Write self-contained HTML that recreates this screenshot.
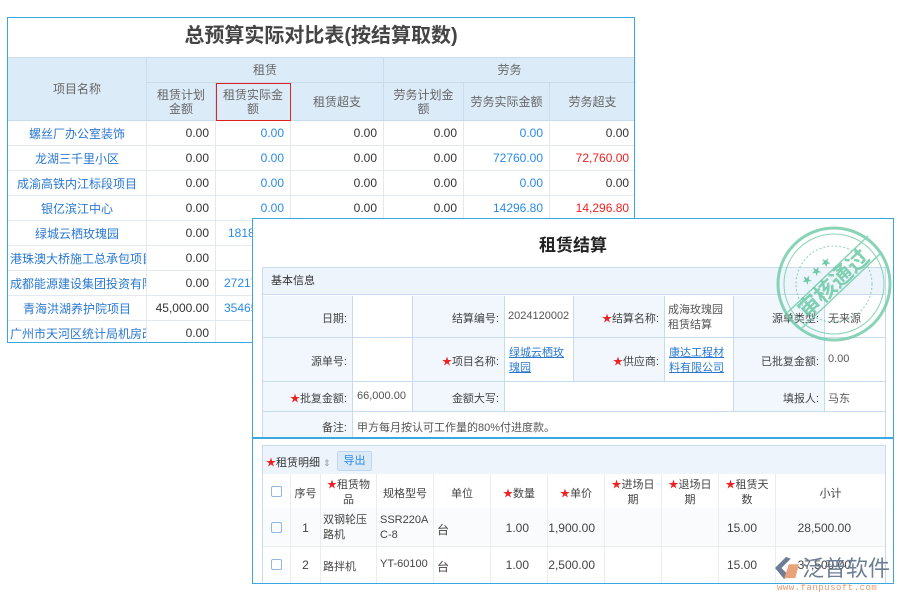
<!DOCTYPE html>
<html><head><meta charset="utf-8">
<style>
*{margin:0;padding:0;box-sizing:border-box}
body{width:900px;height:600px;background:#fff;position:relative;overflow:hidden;font-family:"Liberation Sans","Noto Sans CJK SC",sans-serif;font-size:12px;color:#333}
.a{position:absolute}
#back{left:7px;top:17px;width:628px;height:326px;border:1px solid #39a7e0;background:#fff;overflow:hidden}
#back table{border-collapse:collapse;table-layout:fixed;position:absolute;left:-1px;top:39px;width:628px}
#back td{border:1px solid #e3e9ef;height:25px;text-align:right;padding-right:6px;white-space:nowrap;overflow:hidden}
#back td.n{text-align:center;color:#2a78d0;padding:0 2px}
#back tr.h td{background:#dcebf8;color:#666;text-align:center;border-color:#c8dcee;padding:0;white-space:normal;line-height:14px}
.b{color:#2a8ae6}.r{color:#ee2222}
#front{left:252px;top:218px;width:642px;height:366px;border:1px solid #39a7e0;background:#fff;overflow:hidden}
.ln{position:absolute;background:#c6dbee}
.lab{position:absolute;text-align:right;color:#444}
.val{position:absolute;color:#555}
.st{color:#e22;font-size:10px}
.lk{color:#2a78d0;text-decoration:underline}
</style></head><body>
<div id="back" class="a">
<div class="a" style="left:0;top:0;width:626px;height:39px;text-align:center;line-height:37px;font-size:20px;font-weight:bold;color:#444">总预算实际对比表(按结算取数)</div>
<table>
<colgroup><col style="width:139px"><col style="width:69px"><col style="width:75px"><col style="width:93px"><col style="width:80px"><col style="width:86px"><col style="width:86px"></colgroup>
<tr class="h"><td rowspan="2" style="vertical-align:top;padding-top:24px">项目名称</td><td colspan="3" style="height:25px">租赁</td><td colspan="3">劳务</td></tr>
<tr class="h" style="height:38px"><td>租赁计划<br>金额</td><td style="outline:1px solid #d22;outline-offset:-1px">租赁实际金<br>额</td><td>租赁超支</td><td>劳务计划金<br>额</td><td>劳务实际金额</td><td>劳务超支</td></tr>
<tr><td class="n">螺丝厂办公室装饰</td><td>0.00</td><td class="b">0.00</td><td>0.00</td><td>0.00</td><td class="b">0.00</td><td>0.00</td></tr>
<tr><td class="n">龙湖三千里小区</td><td>0.00</td><td class="b">0.00</td><td>0.00</td><td>0.00</td><td class="b">72760.00</td><td class="r">72,760.00</td></tr>
<tr><td class="n">成渝高铁内江标段项目</td><td>0.00</td><td class="b">0.00</td><td>0.00</td><td>0.00</td><td class="b">0.00</td><td>0.00</td></tr>
<tr><td class="n">银亿滨江中心</td><td>0.00</td><td class="b">0.00</td><td>0.00</td><td>0.00</td><td class="b">14296.80</td><td class="r">14,296.80</td></tr>
<tr><td class="n">绿城云栖玫瑰园</td><td>0.00</td><td class="b" style="text-align:left;padding-left:12px">18180</td><td></td><td></td><td></td><td></td></tr>
<tr><td class="n" style="text-align:left">港珠澳大桥施工总承包项目</td><td>0.00</td><td></td><td></td><td></td><td></td><td></td></tr>
<tr><td class="n" style="text-align:left">成都能源建设集团投资有限</td><td>0.00</td><td class="b" style="text-align:left;padding-left:8px">27217</td><td></td><td></td><td></td><td></td></tr>
<tr><td class="n">青海洪湖养护院项目</td><td>45,000.00</td><td class="b" style="text-align:left;padding-left:8px">35465</td><td></td><td></td><td></td><td></td></tr>
<tr><td class="n" style="text-align:left">广州市天河区统计局机房改</td><td>0.00</td><td></td><td></td><td></td><td></td><td></td></tr>
</table>
</div>

<div id="front" class="a">
<div class="a" style="left:0;top:12px;width:640px;text-align:center;font-size:17px;font-weight:bold;color:#222">租赁结算</div>
<div class="a" style="left:9px;top:48px;width:624px;height:172px;border:1px solid #c6dbee;background:#fff"></div>
<div class="a" style="left:10px;top:49px;width:622px;height:27px;background:#edf4fb;border-bottom:1px solid #c6dbee;line-height:26px;padding-left:8px;font-size:11px;color:#333">基本信息</div>
<div class="a" style="left:10px;top:77px;width:89px;height:143px;background:#f1f7fd"></div>
<div class="a" style="left:159px;top:77px;width:92px;height:115px;background:#f1f7fd"></div>
<div class="a" style="left:320px;top:77px;width:91px;height:86px;background:#f1f7fd"></div>
<div class="a" style="left:480px;top:77px;width:91px;height:115px;background:#f1f7fd"></div>
<div class="ln" style="left:10px;top:118px;width:622px;height:1px"></div>
<div class="ln" style="left:10px;top:162px;width:622px;height:1px"></div>
<div class="ln" style="left:10px;top:192px;width:622px;height:1px"></div>
<div class="ln" style="left:99px;top:77px;width:1px;height:143px"></div>
<div class="ln" style="left:159px;top:77px;width:1px;height:115px"></div>
<div class="ln" style="left:251px;top:77px;width:1px;height:115px"></div>
<div class="ln" style="left:320px;top:77px;width:1px;height:86px"></div>
<div class="ln" style="left:411px;top:77px;width:1px;height:86px"></div>
<div class="ln" style="left:480px;top:77px;width:1px;height:115px"></div>
<div class="ln" style="left:571px;top:77px;width:1px;height:115px"></div>
<div style="font-size:11px">
<div class="lab" style="left:10px;top:91px;width:84px">日期:</div>
<div class="lab" style="left:160px;top:91px;width:86px">结算编号:</div>
<div class="val" style="left:255px;top:91px">2024120002</div>
<div class="lab" style="left:320px;top:91px;width:86px"><span class="st">★</span>结算名称:</div>
<div class="val" style="left:415px;top:84px;width:62px;line-height:15px">成海玫瑰园租赁结算</div>
<div class="lab" style="left:480px;top:91px;width:86px">源单类型:</div>
<div class="val" style="left:575px;top:91px">无来源</div>
<div class="lab" style="left:10px;top:134px;width:84px">源单号:</div>
<div class="lab" style="left:160px;top:134px;width:86px"><span class="st">★</span>项目名称:</div>
<div class="val lk" style="left:256px;top:127px;width:60px;line-height:15px">绿城云栖玫瑰园</div>
<div class="lab" style="left:320px;top:134px;width:86px"><span class="st">★</span>供应商:</div>
<div class="val lk" style="left:416px;top:127px;width:60px;line-height:15px">康达工程材料有限公司</div>
<div class="lab" style="left:480px;top:134px;width:86px">已批复金额:</div>
<div class="val" style="left:575px;top:134px">0.00</div>
<div class="lab" style="left:10px;top:171px;width:84px"><span class="st">★</span>批复金额:</div>
<div class="val" style="left:104px;top:171px">66,000.00</div>
<div class="lab" style="left:160px;top:171px;width:86px">金额大写:</div>
<div class="lab" style="left:480px;top:171px;width:86px">填报人:</div>
<div class="val" style="left:575px;top:171px">马东</div>
<div class="lab" style="left:10px;top:200px;width:84px">备注:</div>
<div class="val" style="left:104px;top:200px">甲方每月按认可工作量的80%付进度款。</div>
</div>
<div class="a" style="left:0;top:218px;width:640px;height:2px;background:#39a7e0"></div>
<div class="a" style="left:9px;top:226px;width:624px;height:150px;border:1px solid #c6dbee;border-bottom:none"></div>
<div class="a" style="left:10px;top:227px;width:622px;height:28px;background:#edf4fb"></div>
<div class="a" style="left:13px;top:235px;font-size:11px"><span class="st">★</span>租赁明细 <span style="color:#999;font-size:9px">⇕</span></div>
<div class="a" style="left:84px;top:232px;width:35px;height:20px;background:#dceaf8;border:1px solid #c0d8ef;border-radius:2px;color:#2a8ae6;text-align:center;line-height:18px;font-size:11px">导出</div>
<div class="a" style="left:10px;top:255px;width:622px;height:35px;background:#fff;border-bottom:1px solid #e3e9ef"></div>
<div class="a" style="left:10px;top:289px;width:622px;height:38px;background:#fafbfc"></div>
<div class="a" style="left:10px;top:327px;width:622px;height:1px;background:#e8edf2"></div>
<div class="a" style="left:37px;top:255px;width:1px;height:110px;background:#e8edf2"></div>
<div class="a" style="left:67px;top:255px;width:1px;height:110px;background:#e8edf2"></div>
<div class="a" style="left:123px;top:255px;width:1px;height:110px;background:#e8edf2"></div>
<div class="a" style="left:180px;top:255px;width:1px;height:110px;background:#e8edf2"></div>
<div class="a" style="left:237px;top:255px;width:1px;height:110px;background:#e8edf2"></div>
<div class="a" style="left:294px;top:255px;width:1px;height:110px;background:#e8edf2"></div>
<div class="a" style="left:351px;top:255px;width:1px;height:110px;background:#e8edf2"></div>
<div class="a" style="left:408px;top:255px;width:1px;height:110px;background:#e8edf2"></div>
<div class="a" style="left:465px;top:255px;width:1px;height:110px;background:#e8edf2"></div>
<div class="a" style="left:522px;top:255px;width:1px;height:110px;background:#e8edf2"></div>
<div style="font-size:11px;color:#444">
<div class="a" style="left:18px;top:267px;width:11px;height:11px;border:1px solid #8fb7e0;border-radius:2px"></div>
<div class="a" style="left:18px;top:303px;width:11px;height:11px;border:1px solid #8fb7e0;border-radius:2px"></div>
<div class="a" style="left:18px;top:340px;width:11px;height:11px;border:1px solid #8fb7e0;border-radius:2px"></div>
<div class="a" style="left:38px;top:266px;width:29px;text-align:center">序号</div>
<div class="a" style="left:68px;top:259px;width:55px;text-align:center;line-height:14px"><span class="st">★</span>租赁物<br>品</div>
<div class="a" style="left:124px;top:266px;width:56px;text-align:center">规格型号</div>
<div class="a" style="left:181px;top:266px;width:56px;text-align:center">单位</div>
<div class="a" style="left:238px;top:266px;width:56px;text-align:center"><span class="st">★</span>数量</div>
<div class="a" style="left:295px;top:266px;width:56px;text-align:center"><span class="st">★</span>单价</div>
<div class="a" style="left:352px;top:259px;width:56px;text-align:center;line-height:14px"><span class="st">★</span>进场日<br>期</div>
<div class="a" style="left:409px;top:259px;width:56px;text-align:center;line-height:14px"><span class="st">★</span>退场日<br>期</div>
<div class="a" style="left:466px;top:259px;width:56px;text-align:center;line-height:14px"><span class="st">★</span>租赁天<br>数</div>
<div class="a" style="left:523px;top:266px;width:109px;text-align:center">小计</div>
</div>
<div style="font-size:12px;color:#444">
<div class="a" style="left:38px;top:302px;width:29px;text-align:center">1</div>
<div class="a" style="left:70px;top:294px;line-height:15px;font-size:11px">双钢轮压<br>路机</div>
<div class="a" style="left:127px;top:294px;line-height:15px;font-size:11px">SSR220A<br>C-8</div>
<div class="a" style="left:184px;top:302px">台</div>
<div class="a" style="left:238px;top:302px;width:38px;text-align:right">1.00</div>
<div class="a" style="left:295px;top:302px;width:47px;text-align:right">1,900.00</div>
<div class="a" style="left:466px;top:302px;width:38px;text-align:right">15.00</div>
<div class="a" style="left:523px;top:302px;width:75px;text-align:right">28,500.00</div>
<div class="a" style="left:38px;top:339px;width:29px;text-align:center">2</div>
<div class="a" style="left:70px;top:339px;font-size:11px">路拌机</div>
<div class="a" style="left:127px;top:339px;font-size:11px">YT-60100</div>
<div class="a" style="left:184px;top:339px">台</div>
<div class="a" style="left:238px;top:339px;width:38px;text-align:right">1.00</div>
<div class="a" style="left:295px;top:339px;width:47px;text-align:right">2,500.00</div>
<div class="a" style="left:466px;top:339px;width:38px;text-align:right">15.00</div>
<div class="a" style="left:523px;top:339px;width:75px;text-align:right">37,500.00</div>
</div>
</div>

<svg class="a" style="left:774px;top:224px" width="120" height="120" viewBox="0 0 120 120">
<g fill="none" stroke="#6ccaa6" opacity="0.8">
<circle cx="60" cy="60" r="56" stroke-width="3"/>
<circle cx="60" cy="60" r="50" stroke-width="1"/>
<circle cx="60" cy="60" r="38" stroke-width="1" stroke-dasharray="2 2"/>
<line x1="14" y1="88" x2="94" y2="12" stroke-width="1.5"/>
<line x1="28" y1="104" x2="108" y2="28" stroke-width="1.5"/>
</g>
<text x="60" y="67" transform="rotate(-43 60 60)" text-anchor="middle" font-size="22" font-weight="bold" fill="#6ccaa6" opacity="0.85" font-family="Noto Sans CJK SC,sans-serif">审核通过</text>
<text x="38" y="42" font-size="10" fill="#6ccaa6" transform="rotate(-43 60 60)">★ ★ ★</text>
</svg>

<div class="a" style="left:773px;top:553px;width:120px;height:40px">
<svg class="a" style="left:0;top:3px" width="28" height="24" viewBox="0 0 30 26"><path d="M14 1 L2 13 L12 25 L16 20 L9 13 L19 3Z" fill="#6d7e94"/><path d="M17 9 L28 9 L24 24 L12 24Z" fill="#e8a37a"/></svg>
<div class="a" style="left:29px;top:-2px;font-size:22px;color:#6d7e94;font-family:'Noto Sans CJK SC',sans-serif;white-space:nowrap">泛普软件</div>
<div class="a" style="left:4px;top:30px;font-size:9px;color:#e89a70;font-family:'Liberation Mono',monospace;white-space:nowrap;letter-spacing:0.5px">www.fanpusoft.com</div>
</div>
</body></html>
